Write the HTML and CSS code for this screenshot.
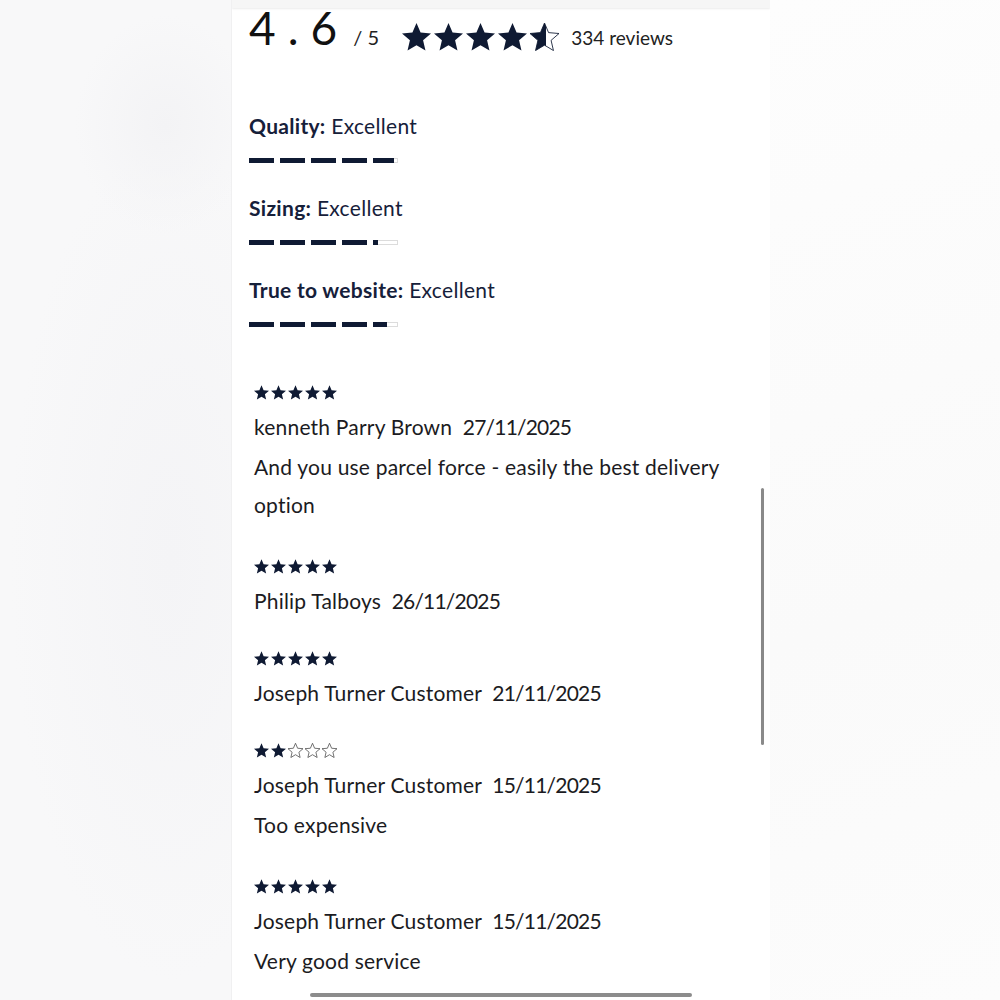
FILE: index.html
```html
<!DOCTYPE html>
<html lang="en">
<head>
    <meta charset="UTF-8">
    <meta name="viewport" content="width=device-width, initial-scale=1.0">
    <title>Customer reviews</title>
    <link rel="stylesheet" href="styles.css">
</head>
<body>
    <svg width="0" height="0" class="defs">
        <defs>
            <symbol id="star" viewBox="2 2 20 19.3">
                <path d="M12 17.27L18.18 21l-1.64-7.03L22 9.24l-7.19-.61L12 2 9.19 8.63 2 9.24l5.46 4.73L5.82 21z"/>
            </symbol>
            <linearGradient id="halfFill" x1="0" x2="1" y1="0" y2="0">
                <stop offset="0.55" stop-color="#0f1a33"/>
                <stop offset="0.55" stop-color="#fff"/>
            </linearGradient>
        </defs>
    </svg>

    <div class="side side-left"></div>

    <div class="panel">
        <div class="topbar"></div>

        <!-- overall score -->
        <div class="summary">
            <span class="score">4.6</span>
            <span class="out-of">/ 5</span>
            <span class="big-stars">
                <svg><use href="#star"/></svg>
                <svg><use href="#star"/></svg>
                <svg><use href="#star"/></svg>
                <svg><use href="#star"/></svg>
                <svg class="half"><use href="#star"/></svg>
            </span>
            <span class="count">334 reviews</span>
        </div>

        <!-- attribute ratings -->
        <div class="attributes">
            <div class="attr">
                <div class="attr-label"><b>Quality:</b> Excellent</div>
                <div class="meter">
                    <span class="seg full"></span><span class="seg full"></span><span class="seg full"></span><span class="seg full"></span>
                    <span class="seg"><i style="width: 90%"></i></span>
                </div>
            </div>
            <div class="attr">
                <div class="attr-label"><b>Sizing:</b> Excellent</div>
                <div class="meter">
                    <span class="seg full"></span><span class="seg full"></span><span class="seg full"></span><span class="seg full"></span>
                    <span class="seg"><i style="width: 20%"></i></span>
                </div>
            </div>
            <div class="attr">
                <div class="attr-label"><b>True to website:</b> Excellent</div>
                <div class="meter">
                    <span class="seg full"></span><span class="seg full"></span><span class="seg full"></span><span class="seg full"></span>
                    <span class="seg"><i style="width: 60%"></i></span>
                </div>
            </div>
        </div>

        <!-- review list -->
        <div class="reviews">
            <div class="review">
                <div class="stars">
                    <svg><use href="#star"/></svg><svg><use href="#star"/></svg><svg><use href="#star"/></svg><svg><use href="#star"/></svg><svg><use href="#star"/></svg>
                </div>
                <div class="author">kenneth Parry Brown <span class="date">27/11/2025</span></div>
                <div class="comment">And you use parcel force - easily the best delivery option</div>
            </div>
            <div class="review">
                <div class="stars">
                    <svg><use href="#star"/></svg><svg><use href="#star"/></svg><svg><use href="#star"/></svg><svg><use href="#star"/></svg><svg><use href="#star"/></svg>
                </div>
                <div class="author">Philip Talboys <span class="date">26/11/2025</span></div>
            </div>
            <div class="review">
                <div class="stars">
                    <svg><use href="#star"/></svg><svg><use href="#star"/></svg><svg><use href="#star"/></svg><svg><use href="#star"/></svg><svg><use href="#star"/></svg>
                </div>
                <div class="author">Joseph Turner Customer <span class="date">21/11/2025</span></div>
            </div>
            <div class="review">
                <div class="stars">
                    <svg><use href="#star"/></svg><svg><use href="#star"/></svg><svg class="empty"><use href="#star"/></svg><svg class="empty"><use href="#star"/></svg><svg class="empty"><use href="#star"/></svg>
                </div>
                <div class="author">Joseph Turner Customer <span class="date">15/11/2025</span></div>
                <div class="comment">Too expensive</div>
            </div>
            <div class="review">
                <div class="stars">
                    <svg><use href="#star"/></svg><svg><use href="#star"/></svg><svg><use href="#star"/></svg><svg><use href="#star"/></svg><svg><use href="#star"/></svg>
                </div>
                <div class="author">Joseph Turner Customer <span class="date">15/11/2025</span></div>
                <div class="comment">Very good service</div>
            </div>
        </div>

        <div class="scrollbar"></div>
        <div class="home-bar"></div>
    </div>

    <div class="side side-right"></div>
</body>
</html>
```

FILE: styles.css
```css
* {
    box-sizing: border-box;
}
html, body {
    height: 100%;
}
body {
    margin: 0;
    display: flex;
    font-family: Lato, 'Noto Sans', sans-serif;
    color: #1b1b22;
    background: #fbfbfb;
    overflow: hidden;
}
.defs {
    position: absolute;
}
.side-left {
    width: 232px;
    background:
        radial-gradient(ellipse 90px 110px at 165px 125px, #f3f3f5, transparent),
        radial-gradient(ellipse 160px 420px at 170px 560px, #f4f4f6, transparent),
        #f8f8f9;
    border-right: 1px solid #f0f0f1;
}
.side-right {
    flex: 1;
    background: linear-gradient(160deg, #fdfdfd, #fafafa 60%, #fcfcfc);
}
.panel {
    position: relative;
    width: 538px;
    height: 1000px;
    background: #fff;
    overflow: hidden;
}
.topbar {
    height: 8px;
    background: #f6f6f6;
    box-shadow: 0 1px 2px rgba(0, 0, 0, 0.08);
}

/* summary row */
.summary {
    padding-left: 17px;
    height: 40px;
    line-height: 40px;
    white-space: nowrap;
}
.score {
    font-size: 46px;
    letter-spacing: 12px;
    color: #111;
}
.out-of {
    font-size: 20px;
    color: #222;
}
.big-stars {
    display: inline-flex;
    gap: 3px;
    margin-left: 19px;
    vertical-align: -6px;
}
.big-stars svg {
    width: 29px;
    height: 28px;
    fill: #0f1a33;
}
.big-stars svg.half {
    fill: url(#halfFill);
    stroke: #0f1a33;
    stroke-width: 0.6;
}
.count {
    font-size: 19px;
    margin-left: 8px;
    color: #222;
}

/* attribute meters */
.attributes {
    padding: 64px 0 0 17px;
}
.attr-label {
    font-size: 21px;
    line-height: 28px;
    letter-spacing: 0.3px;
    color: #16203a;
}
.attr-label b {
    font-weight: 700;
}
.meter {
    display: flex;
    gap: 6px;
    margin: 18px 0 31px;
}
.seg {
    width: 25px;
    height: 5px;
    background: #fff;
    border: 1px solid #dcdcdc;
    display: flex;
}
.seg.full {
    background: #0f1a33;
    border-color: #0f1a33;
}
.seg i {
    display: block;
    height: 5px;
    background: #0f1a33;
    margin: -1px 0 0 -1px;
}
.attr:last-child .meter {
    margin-bottom: 0;
}

/* reviews */
.reviews {
    padding: 49px 0 0 22px;
}
.review {
    padding-bottom: 22px;
}
.stars {
    display: flex;
    align-items: center;
    gap: 2px;
    height: 32px;
}
.stars svg {
    width: 15px;
    height: 15px;
    fill: #0f1a33;
}
.stars svg.empty {
    fill: #fff;
    stroke: #555;
    stroke-width: 1.1;
}
.author {
    font-size: 21px;
    line-height: 38px;
    letter-spacing: 0.2px;
}
.date {
    margin-left: 5px;
    letter-spacing: -0.8px;
}
.comment {
    font-size: 21px;
    line-height: 38px;
    letter-spacing: 0.2px;
    margin: 2px 0 4px;
    max-width: 490px;
}

/* overlays */
.scrollbar {
    position: absolute;
    left: 529px;
    top: 488px;
    width: 3px;
    height: 257px;
    border-radius: 2px;
    background: #8a8a8a;
}
.home-bar {
    position: absolute;
    left: 78px;
    bottom: 3px;
    width: 382px;
    height: 4px;
    border-radius: 2px;
    background: #8c8c8c;
}
```
